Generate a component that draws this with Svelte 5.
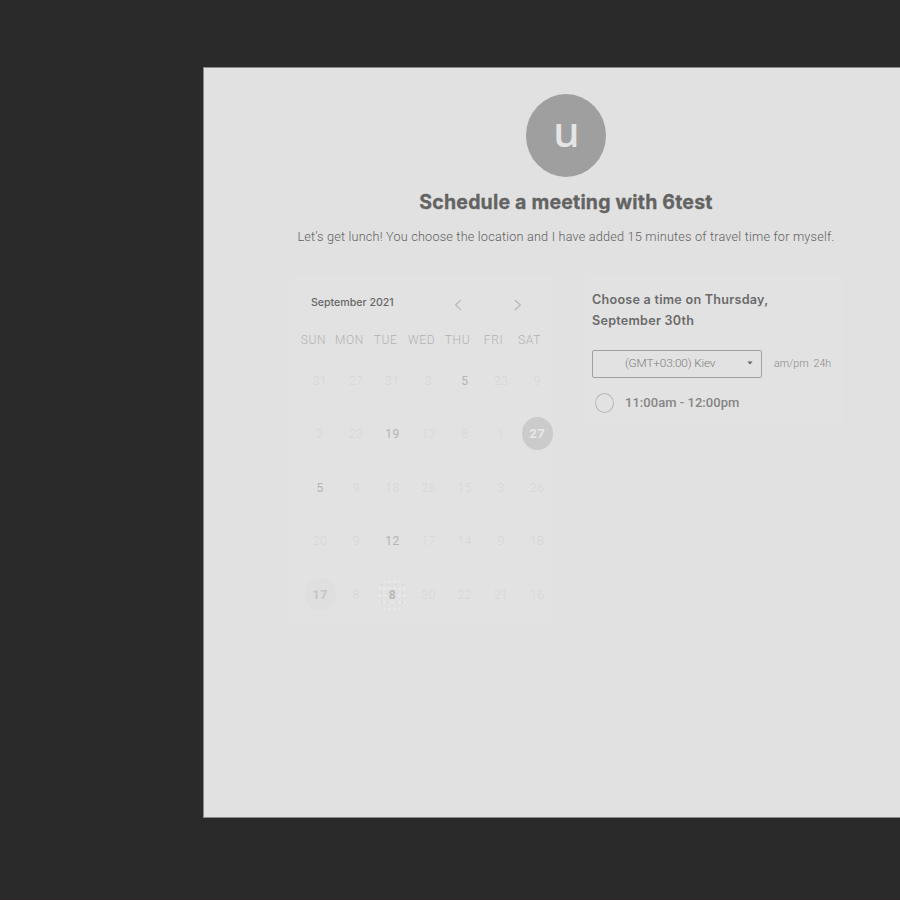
<script>
  const weekdays = ['SUN', 'MON', 'TUE', 'WED', 'THU', 'FRI', 'SAT'];
  const strong = 'strong';
  const weeks = [
    [[31], [27], [31], [3], [5, strong], [23], [9]],
    [[3], [23], [19, strong], [13], [8], [1], [27, 'selected']],
    [[5, strong], [9], [18], [26], [15], [3], [26]],
    [[20], [9], [12, strong], [17], [14], [9], [18]],
    [[17, 'today'], [8], [8, 'speckled'], [30], [22], [21], [16]]
  ];
</script>

<div class="page">
  <main class="panel">
    <div class="avatar"><span>u</span></div>
    <h1>Schedule a meeting with 6test</h1>
    <p class="intro">Let’s get lunch! You choose the location and I have added 15 minutes of travel time for myself.</p>

    <div class="columns">
      <section class="calendar">
        <header>
          <span class="month">September 2021</span>
          <svg class="prev" width="8" height="12" viewBox="0 0 8 12"><path d="M6.8 1.2 1.6 6l5.2 4.8" /></svg>
          <svg class="next" width="8" height="12" viewBox="0 0 8 12"><path d="M.8 1 6.4 6 .8 11" /></svg>
        </header>
        <div class="weekdays">
          {#each weekdays as name}<span>{name}</span>{/each}
        </div>
        <div class="days">
          {#each weeks as week}
            {#each week as [day, kind]}
              <div class="cell"><span class="day {kind ?? ''}">{day}</span></div>
            {/each}
          {/each}
        </div>
      </section>

      <section class="times">
        <h2>Choose a time on Thursday,<br />September 30th</h2>
        <div class="zone-row">
          <div class="select">
            <span>(GMT+03:00) Kiev</span>
            <svg width="6" height="4" viewBox="0 0 6 4"><path d="M.4.5h5.2L3 3.5z" /></svg>
          </div>
          <span class="format">am/pm</span>
          <span class="format last">24h</span>
        </div>
        <div class="slot"><i></i><span>11:00am - 12:00pm</span></div>
      </section>
    </div>
  </main>
</div>

<style>
  :global(body) { margin: 0; background: #2a2a2a; }
  .page {
    box-sizing: border-box;
    width: 900px;
    height: 900px;
    padding: 67px 0 0 203px;
    overflow: hidden;
    background: #2a2a2a;
    border-bottom: 1px solid #302529;
    font-family: Roboto, sans-serif;
    color: #777;
    white-space: nowrap;
  }
  .panel {
    box-sizing: border-box;
    width: 726px;
    height: 751px;
    padding-top: 26px;
    border: 1px solid #8a8a8a;
    background: #e1e1e1;
    display: flex;
    flex-direction: column;
    align-items: center;
  }
  .avatar {
    flex: none;
    width: 80px;
    height: 83px;
    border-radius: 50%;
    background: #9f9f9f;
    color: #e5e5e5;
    font: 500 42px/73px "Noto Sans", sans-serif;
    text-align: center;
    text-indent: 1px;
  }
  h1 {
    margin: 12px 0 0;
    font: 700 19.5px/26px Inter, sans-serif;
    letter-spacing: 0.2px;
    color: #636363;
    -webkit-text-stroke: 0.3px #636363;
  }
  .intro {
    margin: 12px 0 0;
    font-size: 12.7px;
    font-weight: 300;
    line-height: 20px;
    letter-spacing: 0.19px;
    color: #626262;
  }
  .columns {
    align-self: stretch;
    display: flex;
    align-items: flex-start;
    margin: 28px 0 0 86px;
  }
  .calendar {
    box-sizing: border-box;
    width: 264px;
    height: 350px;
    border-radius: 2px;
    background: #e2e2e2;
  }
  .calendar header {
    display: flex;
    height: 38px;
    padding: 18px 0 0 21px;
    box-sizing: border-box;
  }
  .month {
    width: 143px;
    font: 500 10.6px/20px Inter, sans-serif;
    color: #666;
  }
  header svg { margin-top: 6px; fill: none; stroke: #b5b5b5; stroke-width: 1.1; }
  .next { margin-left: 52px; }
  .weekdays {
    display: grid;
    grid-template-columns: repeat(7, 36px);
    padding: 17px 0 0 5.5px;
    font-size: 12px;
    line-height: 20px;
    font-weight: 300;
    letter-spacing: 0.6px;
    color: #b2b2b2;
    text-align: center;
  }
  .days {
    display: grid;
    grid-template-columns: repeat(7, 36.2px);
    grid-auto-rows: 53.5px;
    padding: 3.5px 0 0 12px;
  }
  .cell { display: flex; align-items: center; justify-content: center; }
  .day {
    flex: none;
    width: 31px;
    height: 33px;
    border-radius: 50%;
    text-align: center;
    font-size: 12px;
    line-height: 34px;
    font-weight: 300;
    letter-spacing: 0.5px;
    color: #d6d6d6;
  }
  .strong { font-weight: 400; color: #b4b4b4; }
  .selected { background: #cbcbcb; color: #e8e8e8; font-size: 13px; font-weight: 700; }
  .today { background: #dfdfdf; color: #c6c6c6; font-size: 13px; font-weight: 700; }
  .speckled {
    color: #b8b8b8;
    font-weight: 700;
    background:
      radial-gradient(circle, #d8d8d8 0.6px, transparent 1.4px) 1px 2px / 7px 9px,
      radial-gradient(circle, #e7e7e7 1px, transparent 2.2px) 0 0 / 5px 7px,
      #e1e1e1;
  }
  .times {
    box-sizing: border-box;
    width: 258px;
    height: 150px;
    margin-left: 31px;
    padding: 14px 0 0 7px;
    background: #e2e2e2;
  }
  h2 {
    margin: 0;
    font: 600 12.6px/21px Inter, sans-serif;
    letter-spacing: 0.25px;
    color: #6a6a6a;
  }
  .zone-row { display: flex; align-items: center; margin-top: 18.5px; }
  .select {
    box-sizing: border-box;
    display: flex;
    align-items: center;
    width: 170px;
    height: 28px;
    padding: 0 8px 2px 32px;
    border: 1px solid #a0a0a0;
    border-radius: 2px;
    justify-content: space-between;
    font-size: 11.8px;
    font-weight: 300;
    letter-spacing: -0.15px;
    color: #7c7c7c;
  }
  .select svg { fill: #666; }
  .format { margin-left: 12px; padding-bottom: 1px; font-size: 10.6px; font-weight: 300; color: #888; }
  .last { margin-left: 5px; }
  .slot { display: flex; align-items: center; margin: 15px 0 0 3px; height: 20px; }
  .slot i {
    box-sizing: border-box;
    width: 19px;
    height: 20px;
    border: 1px solid #b8b8b8;
    border-radius: 50%;
  }
  .slot span { margin-left: 11px; padding-bottom: 1px; font-size: 13px; font-weight: 500; letter-spacing: 0.03px; color: #858585; }
</style>
